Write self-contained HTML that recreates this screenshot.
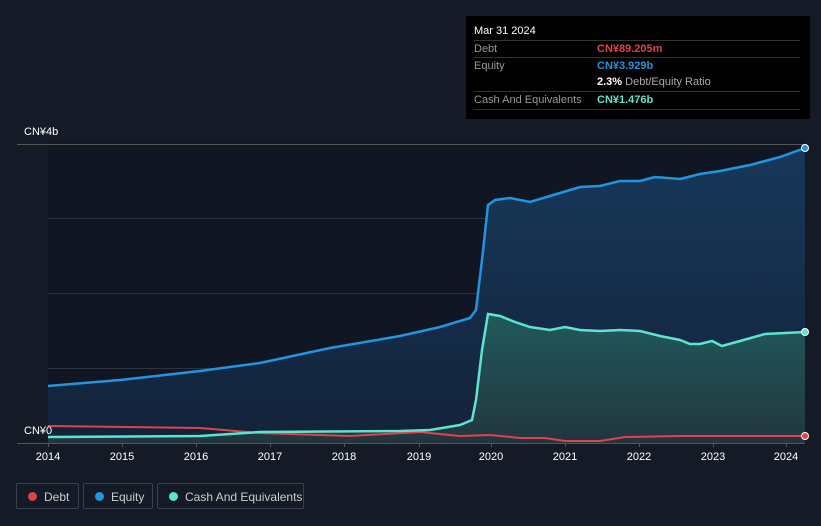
<!DOCTYPE html>
<html><head><meta charset="utf-8"><style>
body{margin:0;width:821px;height:526px;background:#151b26;font-family:"Liberation Sans",sans-serif;overflow:hidden;position:relative}
.tt{position:absolute;left:466px;top:16px;width:344px;height:103px;background:#000;color:#fff;font-size:11px}
.tt .r{position:absolute;left:8px;width:326px;height:17px;border-top:1px solid #333;line-height:17px}
.tt .l{color:#999}
.tt .v{position:absolute;left:123px;top:0;font-weight:bold}
.leg{position:absolute;top:483px;height:26px;border:1px solid #3a4050;border-radius:2px;color:#ccc;font-size:12px;line-height:26px;box-sizing:border-box}
.leg i{position:absolute;left:11px;top:8px;width:9px;height:9px;border-radius:50%}
.leg span{position:absolute;left:27px}
.ax{position:absolute;top:451px;color:#fff;font-size:11px;width:40px;text-align:center}
</style></head><body>
<svg width="821" height="526" style="position:absolute;left:0;top:0">
<defs>
<linearGradient id="ge" x1="0" y1="0" x2="0" y2="1"><stop offset="0" stop-color="#17385a"/><stop offset="1" stop-color="#13223a"/></linearGradient>
<linearGradient id="gc" x1="0" y1="0" x2="0" y2="1"><stop offset="0" stop-color="#1f5a5a"/><stop offset="1" stop-color="#23353f"/></linearGradient>
</defs>
<rect x="48" y="140" width="757" height="303" fill="#111722"/>
<g stroke="#2c3340" stroke-width="1">
<line x1="17" y1="144.5" x2="805" y2="144.5" stroke="#555"/>
<line x1="48" y1="218.5" x2="805" y2="218.5"/>
<line x1="48" y1="293.5" x2="805" y2="293.5"/>
<line x1="48" y1="368.5" x2="805" y2="368.5"/>
</g>
<path d="M48,386 L120,380 L200,371 L260,363 L330,348 L400,336 L440,327 L470,318 L476,310 L482,260 L488,205 L495,200 L510,198 L530,202 L550,196 L570,190 L580,187 L600,186 L620,181 L640,181 L655,177 L680,179 L700,174 L720,171 L750,165 L780,157 L805,148 L805,443 L48,443Z" fill="url(#ge)"/>
<path d="M48,437 L200,436 L260,432 L400,431 L430,430 L460,425 L472,420 L476,400 L482,350 L488,314 L500,316 L515,322 L530,327 L550,330 L565,327 L580,330 L600,331 L620,330 L640,331 L660,336 L680,340 L690,344 L700,344 L712,341 L722,346 L740,341 L765,334 L805,332 L805,443 L48,443Z" fill="url(#gc)"/>
<path d="M48,386 L120,380 L200,371 L260,363 L330,348 L400,336 L440,327 L470,318 L476,310 L482,260 L488,205 L495,200 L510,198 L530,202 L550,196 L570,190 L580,187 L600,186 L620,181 L640,181 L655,177 L680,179 L700,174 L720,171 L750,165 L780,157 L805,148" fill="none" stroke="#2394e0" stroke-width="2.5"/>
<path d="M48,426 L200,428 L260,433 L350,436 L420,432 L460,436 L490,435 L520,438 L545,438 L565,441 L600,441 L625,437 L680,436 L805,436" fill="none" stroke="#e0434b" stroke-width="2"/>
<path d="M48,437 L200,436 L260,432 L400,431 L430,430 L460,425 L472,420 L476,400 L482,350 L488,314 L500,316 L515,322 L530,327 L550,330 L565,327 L580,330 L600,331 L620,330 L640,331 L660,336 L680,340 L690,344 L700,344 L712,341 L722,346 L740,341 L765,334 L805,332" fill="none" stroke="#5ee3cf" stroke-width="2.5"/>
<line x1="17" y1="443.5" x2="805" y2="443.5" stroke="#555"/>
<g stroke="#555"><line x1="48.5" y1="443" x2="48.5" y2="447"/><line x1="122.5" y1="443" x2="122.5" y2="447"/><line x1="196.5" y1="443" x2="196.5" y2="447"/><line x1="270.5" y1="443" x2="270.5" y2="447"/><line x1="344.5" y1="443" x2="344.5" y2="447"/><line x1="419.5" y1="443" x2="419.5" y2="447"/><line x1="491.5" y1="443" x2="491.5" y2="447"/><line x1="565.5" y1="443" x2="565.5" y2="447"/><line x1="639.5" y1="443" x2="639.5" y2="447"/><line x1="713.5" y1="443" x2="713.5" y2="447"/><line x1="786.5" y1="443" x2="786.5" y2="447"/></g>
<circle cx="805" cy="148" r="3.5" fill="#2394e0" stroke="#fff" stroke-width="1"/>
<circle cx="805" cy="332" r="3.5" fill="#5ee3cf" stroke="#fff" stroke-width="1"/>
<circle cx="805" cy="436" r="3.5" fill="#e0434b" stroke="#fff" stroke-width="1"/>
</svg>
<div style="position:absolute;left:24px;top:126px;color:#fff;font-size:11px">CN¥4b</div>
<div style="position:absolute;left:24px;top:425px;color:#fff;font-size:11px">CN¥0</div>
<div class="ax" style="left:28px">2014</div><div class="ax" style="left:102px">2015</div><div class="ax" style="left:176px">2016</div><div class="ax" style="left:250px">2017</div><div class="ax" style="left:324px">2018</div><div class="ax" style="left:399px">2019</div><div class="ax" style="left:471px">2020</div><div class="ax" style="left:545px">2021</div><div class="ax" style="left:619px">2022</div><div class="ax" style="left:693px">2023</div><div class="ax" style="left:766px">2024</div>
<div class="tt">
<div style="position:absolute;left:8px;top:9px;font-size:11px">Mar 31 2024</div>
<div class="r" style="top:24px"><span class="l">Debt</span><span class="v" style="color:#e0434b">CN¥89.205m</span></div>
<div class="r" style="top:41px"><span class="l">Equity</span><span class="v" style="color:#2394e0">CN¥3.929b</span></div>
<div class="r" style="top:58px;border-top:none"><span class="v" style="color:#fff">2.3% <span style="color:#aaa;font-weight:normal">Debt/Equity Ratio</span></span></div>
<div class="r" style="top:75px;border-bottom:1px solid #333"><span class="l">Cash And Equivalents</span><span class="v" style="color:#5ee3cf">CN¥1.476b</span></div>
</div>
<div class="leg" style="left:16px;width:63px"><i style="background:#e0434b"></i><span>Debt</span></div>
<div class="leg" style="left:83px;width:70px"><i style="background:#2394e0"></i><span>Equity</span></div>
<div class="leg" style="left:157px;width:147px"><i style="background:#5ee3cf"></i><span>Cash And Equivalents</span></div>
</body></html>
